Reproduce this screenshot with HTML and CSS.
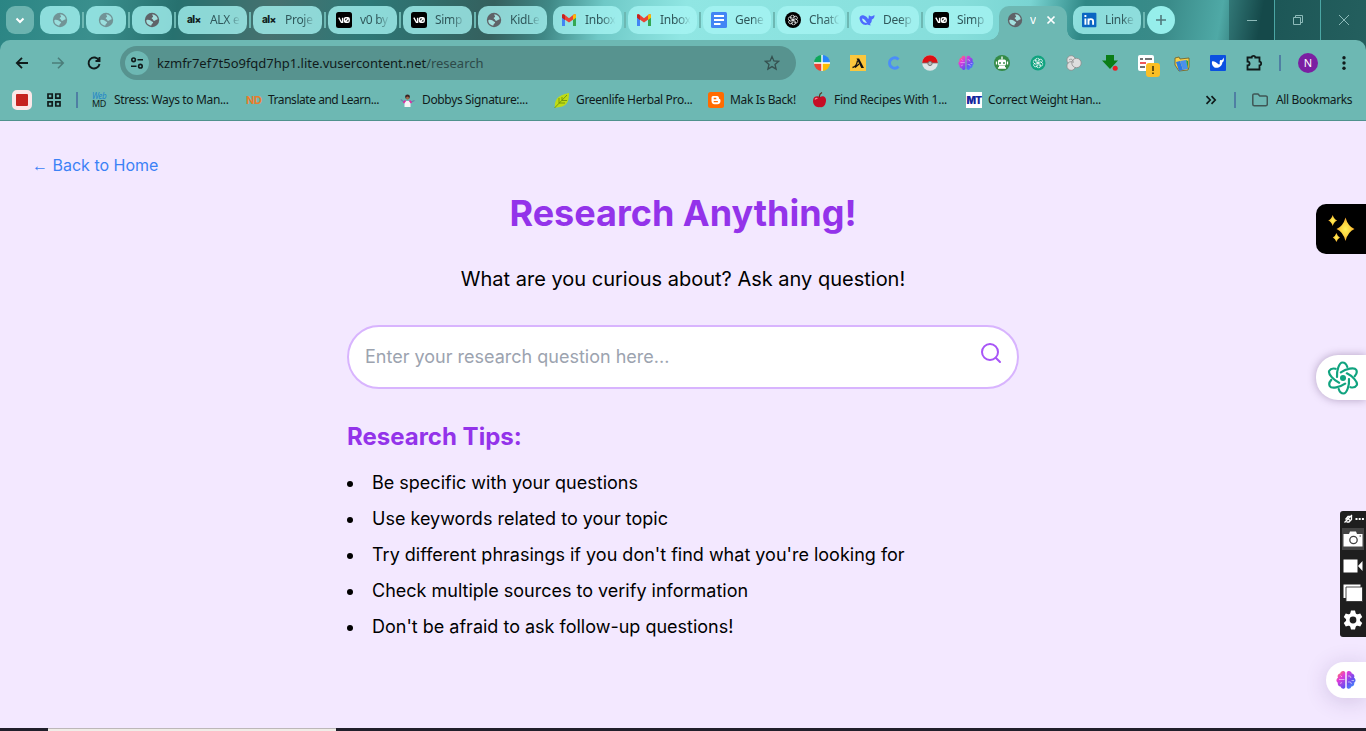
FILE: index.html
```html
<!DOCTYPE html>
<html lang="en">
<head>
<meta charset="utf-8">
<title>Research</title>
<link rel="stylesheet" href="styles.css">
</head>
<body>
<svg class="defs" aria-hidden="true">
  <symbol id="globe" viewBox="0 0 16 16"><circle cx="8" cy="8" r="7.2" fill="#5f6368"/><path d="M2.300 8.200c1.200-.6 2.700-.4 3.900.1 1 .5 1.300 1.300 2.300 1.500.9.300.8 1.400 0 1.700-.8.200-.9.900-1.100 2-2.900-.2-5.300-2.400-5.100-5.300zM8.300 2.300c2.700.1 5 2 5.400 4.700-.5 1.100-1.700.4-2.200 1.200-.8 1-2.400.7-2.500-.5-.1-.8-1.300-.6-1.300-1.500 0-.8.900-.8 1.300-1.300.5-.8-1-1.300-.7-2.600z" fill="#a4e0de"/></symbol>
  <symbol id="vzero" viewBox="0 0 16 16"><rect width="16" height="16" rx="2.500" fill="#000"/><path d="M2.800 5.700l2.600 4.600h1.200V5.700M8.500 9.100V6.900c0-.8.5-1.200 1.200-1.200h2.200c.8 0 1.300.5 1.300 1.200v2.200c0 .8-.5 1.200-1.300 1.200H9.700c-.7 0-1.200-.4-1.200-1.200zM9 10l3.800-4" fill="none" stroke="#fff" stroke-width="1.400"/></symbol>
  <symbol id="gmail" viewBox="0 0 16 12"><path d="M1 1v11h3V4z" fill="#4285f4"/><path d="M12 3v9h3V1z" fill="#34a853"/><path d="M1 2V1.600C1 .2 2.300-.2 3.300.6L8 4.200 12.700.6C13.700-.2 15 .2 15 1.600V3.500L8 8.600 1 3.500z" fill="#ea4335"/><path d="M12 1.200l.7-.6C13.700-.2 15 .2 15 1.600v2.200l-3 2.200z" fill="#fbbc04"/><path d="M1 1.600C1 .6 1.900 0 2.800.4L4 1.200V6L1 3.800z" fill="#c5221f"/></symbol>
  <symbol id="knot" viewBox="0 0 24 24"><g fill="none" stroke="currentColor" stroke-width="1.700"><path id="petal" d="M12 6.500l4.700-2.700c4-1.300 6.500 4 3.300 6.700l-2 1.200M12 6.500V12"/><use href="#petal" transform="rotate(60 12 12)"/><use href="#petal" transform="rotate(120 12 12)"/><use href="#petal" transform="rotate(180 12 12)"/><use href="#petal" transform="rotate(240 12 12)"/><use href="#petal" transform="rotate(300 12 12)"/></g></symbol>
  <linearGradient id="brainfill" x1="0" y1="0" x2="1" y2="1"><stop offset="0" stop-color="#ff8a3c"/><stop offset=".3" stop-color="#e43ad8"/><stop offset=".65" stop-color="#6a4df0"/><stop offset="1" stop-color="#31a6ff"/></linearGradient>
  <symbol id="brain" viewBox="0 0 20 20"><path d="M9.300 2.500C8 0 4.500 1 4.200 3.500 2 3.800 1 6 2 7.700-.3 9 .2 12 1.800 12.700 1.300 15 3 16.600 4.600 16.500 5.500 19.300 8.800 19.300 9.300 17.200zM10.700 2.500C12 0 15.500 1 15.800 3.500 18 3.800 19 6 18 7.700c2.300 1.300 1.800 4.300.2 5 .5 2.300-1.200 3.900-2.800 3.800-.9 2.800-4.200 2.800-4.700.7z" fill="url(#brainfill)"/><path d="M3 9.500h5.500M4.500 5.500L6 7M4 13.500l2-1M12 6h2l1 2M12 12h2.500l1 2M15.500 10.500H18" fill="none" stroke="#fff" stroke-opacity=".6" stroke-width=".9"/></symbol>
</svg>

<div class="browser">
  <div class="tabstrip">
    <div class="tab-search"><svg width="10" height="7" viewBox="0 0 10 7"><path d="M1.500 1.500L5 5l3.500-3.500" fill="none" stroke="#fff" stroke-width="2"/></svg></div>
    <div class="tab pinned dim sep"><svg class="fav"><use href="#globe"/></svg></div>
    <div class="tab pinned dim sep"><svg class="fav"><use href="#globe"/></svg></div>
    <div class="tab pinned sep"><svg class="fav"><use href="#globe"/></svg></div>
    <div class="tab sep"><span class="fav alx">al×</span><span class="label">ALX e</span></div>
    <div class="tab sep"><span class="fav alx">al×</span><span class="label">Proje</span></div>
    <div class="tab sep"><svg class="fav"><use href="#vzero"/></svg><span class="label">v0 by</span></div>
    <div class="tab sep"><svg class="fav"><use href="#vzero"/></svg><span class="label">Simp</span></div>
    <div class="tab"><svg class="fav"><use href="#globe"/></svg><span class="label">KidLe</span></div>
    <div class="tab sep"><svg class="fav"><use href="#gmail"/></svg><span class="label">Inbox</span></div>
    <div class="tab sep"><svg class="fav"><use href="#gmail"/></svg><span class="label">Inbox</span></div>
    <div class="tab narrow sep"><svg class="fav" viewBox="0 0 16 16"><rect width="16" height="16" rx="1.500" fill="#4285f4"/><path d="M3 4h10M3 8h10M3 12h6.500" stroke="#fff" stroke-width="2"/></svg><span class="label">Gene</span></div>
    <div class="tab narrow sep"><svg class="fav" viewBox="0 0 16 16"><circle cx="8" cy="8" r="8" fill="#000"/><svg x="2.500" y="2.500" width="11" height="11" color="#fff"><use href="#knot"/></svg></svg><span class="label">ChatG</span></div>
    <div class="tab narrow sep"><svg class="fav" viewBox="0 0 16 16"><path d="M.5 6C1 3.500 3 2.800 5 3.600l2 .9c1 .3 1.200 1.500 2.200 2.500C10 6 9.500 4.500 10 3c1 1.500 2.500 1.500 3 1.200L15.500 3c.2 2.500-1 4-2.700 4.400.2 2-.8 3.600-2 4.600l1.200 1.200c-1.400.3-2.500 0-3.500-.6C4.500 13.800.8 11 .5 6z" fill="#4d6bfe"/><path d="M3 6.500c2.500.2 3.500 2.500 5 4.500-2.500 0-4.700-1.500-5-4.500z" fill="#b7f4f4"/></svg><span class="label">Deep</span></div>
    <div class="tab narrow"><svg class="fav"><use href="#vzero"/></svg><span class="label">Simp</span></div>
    <div class="tab narrow active"><svg class="fav"><use href="#globe"/></svg><span class="label">v</span><svg class="close" width="10" height="10" viewBox="0 0 10 10"><path d="M1.500 1.500l7 7m0-7l-7 7" stroke="#fff" stroke-width="1.700"/></svg></div>
    <div class="tab narrow sep"><svg class="fav" viewBox="0 0 16 16"><rect x="1" y=".8" width="14.400" height="14.400" rx="1" fill="#0a66c2"/><path d="M4.400 6.500v6.200M4.400 3v1.900M7.500 12.700V6.500M7.500 9.400c0-3 4.600-3 4.600 0v3.300" fill="none" stroke="#fff" stroke-width="1.900"/></svg><span class="label">Linke</span></div>
    <div class="newtab"><svg width="12" height="12" viewBox="0 0 12 12"><path d="M6 1v10M1 6h10" stroke="#50787c" stroke-width="1.600"/></svg></div>
    <div class="controls">
      <span><svg width="12" height="12"><path d="M1 6.500h10"/></svg></span>
      <span><svg width="12" height="12"><path d="M1.500 3.500h7v7h-7zM3.500 3.500v-2h7v7h-2"/></svg></span>
      <span><svg width="12" height="12"><path d="M1 1l10 10M11 1L1 11"/></svg></span>
    </div>
  </div>

  <div class="toolbar">
    <svg class="nav" viewBox="0 0 16 16"><path d="M14 8H3M8 2.800L2.800 8 8 13.200" fill="none" stroke="#101b1b" stroke-width="1.800"/></svg>
    <svg class="nav" viewBox="0 0 16 16"><path d="M2 8h11M8 2.800L13.200 8 8 13.200" fill="none" stroke="#4b7d7a" stroke-width="1.600"/></svg>
    <svg class="nav" viewBox="0 0 16 16"><path d="M13 5.500A5.500 5.500 0 1 0 13.500 9M13.500 2v4H9.500" fill="none" stroke="#101b1b" stroke-width="1.900"/></svg>
    <div class="omnibox">
      <span class="site"><svg width="14" height="14" viewBox="0 0 14 14" fill="none" stroke="#101b1b" stroke-width="1.600"><circle cx="3.600" cy="3.800" r="1.800"/><path d="M7.500 3.800H13M1 10.200h5.500"/><circle cx="10.400" cy="10.200" r="1.800"/></svg></span>
      <span class="url">kzmfr7ef7t5o9fqd7hp1.lite.vusercontent.net<span class="path">/research</span></span>
      <svg class="star" viewBox="0 0 16 16"><path d="M8 1.500l1.900 4.400 4.700.4-3.600 3.100 1.100 4.700L8 11.600l-4.100 2.500L5 9.400 1.400 6.300l4.700-.4z" fill="none" stroke="#35504f" stroke-width="1.300"/></svg>
    </div>
    <div class="extensions">
      <svg viewBox="0 0 16 16"><path d="M8 0a8 8 0 0 0-8 8h8z" fill="#0ea75a"/><path d="M8 0a8 8 0 0 1 8 8H8z" fill="#2684fc"/><path d="M0 8a8 8 0 0 0 8 8V8z" fill="#ea4335"/><path d="M8 16a8 8 0 0 0 8-8H8z" fill="#fbbc04"/><path d="M8 0v16M0 8h16" stroke="#fff" stroke-width="1.400"/></svg>
      <svg viewBox="0 0 16 16"><path fill="#fbc73d" d="M0 0h16v16H0z"/><path d="M6.500 3.500h2.600L14 13h-2.700L8 6.200z" fill="#111"/><path d="M2.500 12.500C5 12 7 9 7.500 5.500M5 12.500l4-3.500" fill="none" stroke="#111" stroke-width="1.300"/></svg>
      <svg viewBox="0 0 16 16"><path d="M12.500 4.500C9 .8 3.500 3.500 3.500 8s5.500 7.200 9 3.500" fill="none" stroke="#4b8df8" stroke-width="2.800"/></svg>
      <svg viewBox="0 0 16 16"><circle cx="8" cy="8" r="7.800" fill="#dfe5e7"/><path d="M.2 8a7.800 7.800 0 0 1 15.600 0z" fill="#dd1014"/><path d="M.2 8h15.600" stroke="#777" stroke-width=".8"/><circle cx="8" cy="8.500" r="2.100" fill="#b9b9b9" stroke="#777"/></svg>
      <svg><use href="#brain"/></svg>
      <svg viewBox="0 0 16 16"><circle cx="8" cy="8" r="8" fill="#348b46"/><rect x="4" y="4.500" width="8" height="6" rx="1.500" fill="#fff"/><path d="M8 1.500v3M4 13h8M5 11.500h6M2.500 6.500v3M13.500 6.500v3" stroke="#fff" stroke-width="1.300"/><path d="M6 7v2M10 7v2" stroke="#348b46" stroke-width="1.400"/></svg>
      <svg viewBox="0 0 16 16"><circle cx="8" cy="8" r="7.500" fill="#10a37f"/><svg class="inner" x="2.500" y="2.500" width="11" height="11" color="#fff"><use href="#knot"/></svg></svg>
      <svg viewBox="0 0 16 16" fill="#dedede" stroke="#8c8c8c" stroke-width=".8"><circle cx="5.200" cy="5" r="4.300"/><circle cx="5.200" cy="11" r="4.300"/><circle cx="10.500" cy="8" r="4.700"/><path d="M3 5c2-2 5 0 4 3" fill="none"/></svg>
      <svg viewBox="0 0 16 16"><path d="M4 0h8v5.500h4L8 14 0 5.500h4z" fill="#0b7d17"/><circle cx="13.200" cy="13.300" r="2.500" fill="#ed1c24"/></svg>
      <svg viewBox="0 0 16 16"><rect width="16" height="16" rx="2" fill="#fff"/><path d="M2 4h3M7 4h7M2 12h5" stroke="#444" stroke-width="1.500"/><path d="M2 8h6" stroke="#ed3b3b" stroke-width="1.700"/><rect x="8" y="8" width="14" height="14" rx="3" fill="#fbbf24"/><path d="M15 11v5M15 17.500V19" stroke="#3a2c00" stroke-width="1.500"/></svg>
      <svg viewBox="0 0 16 16"><path d="M1 3l4-1 1 2 9-1v9l-1 3-9 1-4-6z" fill="#f7cf4b" stroke="#705b20" stroke-width=".8"/><path d="M2 7l4-1 3 9-4 1z" fill="#2b78e4"/><path d="M6 6l6-1 2 9-5 1z" fill="#4a90ec"/><path d="M12 5l2 1v8z" fill="#1a9d50"/></svg>
      <svg viewBox="0 0 16 16"><rect width="16" height="16" rx="1" fill="#0b50e0"/><path d="M2 6.500c1.500-.8 4 .5 5.500 2 1.500 1.300 2.500 1.200 2.200-.5C9.500 6.500 10 5 10.500 5c1.500.5 2.500-.5 3-2.500.8 2.500.3 4.300-1.200 5 .2 4.500-7 7.500-9.300 3.500C2 9.500 1.700 8 2 6.500z" fill="#fff"/></svg>
      <svg viewBox="0 0 16 16"><path d="M1.500 2.500h4.200c0-2.200 3.600-2.200 3.600 0h4.200v4.200c2.200 0 2.200 3.600 0 3.600v4.200h-12v-4c2.800 0 2.800-4 0-4z" fill="none" stroke="#101b1b" stroke-width="1.800"/></svg>
    </div>
    <i class="rule"></i>
    <span class="avatar">N</span>
    <svg class="menu" width="4" height="16" viewBox="0 0 4 16" fill="#101b1b"><circle cx="2" cy="2.800" r="1.700"/><circle cx="2" cy="8" r="1.700"/><circle cx="2" cy="13.200" r="1.700"/></svg>
  </div>

  <div class="bookmarks">
    <span class="rec"></span>
    <svg class="apps" width="16" height="16" viewBox="0 0 16 16" fill="none" stroke="#101b1b" stroke-width="1.700"><path d="M2 2h4.200v4.200H2zM9.800 2H14v4.200H9.800zM2 9.800h4.200V14H2zM9.800 9.800H14V14H9.800z"/></svg>
    <i class="rule"></i>
    <div class="list">
      <div class="bm"><span class="ico webmd"><b>Web</b><span>MD</span></span><span class="name">Stress: Ways to Man...</span></div>
      <div class="bm"><span class="ico nd">ND</span><span class="name tight">Translate and Learn...</span></div>
      <div class="bm"><svg class="ico" viewBox="0 0 16 16"><path d="M4.500 15V9h6v6z" fill="#f5f5f5"/><path d="M4 10L.8 7.500M11 10l3.500-1.500" stroke="#6a7fa8" stroke-width="1.100"/><path d="M3.500 11l2-2.500M11.500 11l-2-2.500" stroke="#df2da4" stroke-width="1.800"/><circle cx="7.500" cy="4.800" r="2.400" fill="#3b2221"/><circle cx="7.500" cy="6" r="1.500" fill="#a56a4b"/></svg><span class="name">Dobbys Signature:...</span></div>
      <div class="bm"><svg class="ico" viewBox="0 0 16 16"><path d="M15 1c0 8-2 13-9 14l-5 .8C0 9 3 3 15 1z" fill="#bfdc16"/><path d="M.5 16L13 3M5 11V6M5 11h6M8 8.500V5M8 8.500h5" stroke="#71920b" stroke-width=".9" fill="none"/></svg><span class="name">Greenlife Herbal Pro...</span></div>
      <div class="bm short"><svg class="ico" viewBox="0 0 16 16"><rect width="16" height="16" rx="2.500" fill="#ff6b00"/><path d="M5 4h4c1.500 0 2 .8 2 2.700 1.500.3 1.500 1 1.500 2.300 0 2-1 3.200-3 3.200H6.500C4.500 12.200 3.500 11 3.500 9V6c0-1.200.6-2 1.500-2z" fill="#fff"/><path d="M5.700 6.500h2.600M5.700 9.700h4.200" stroke="#ff6b00" stroke-width="1.300"/></svg><span class="name">Mak Is Back!</span></div>
      <div class="bm"><svg class="ico" viewBox="0 0 16 16"><path d="M8 5c3-2 6.500 0 6 4-.5 4.500-3 7-6 6-3.500 1-7-2-7-6 0-4.500 4-5.500 7-4z" fill="#c60d25"/><path d="M7.500 5.500C7 3 8 1.500 10 .5" stroke="#5b3422" stroke-width="1.200" fill="none"/><path d="M3 7.500c.5-1 1.500-1.300 2.500-1" stroke="#f58a94" stroke-width="1.200" fill="none"/></svg><span class="name loose">Find Recipes With 1...</span></div>
      <div class="bm"><span class="ico mt">MT</span><span class="name">Correct Weight Han...</span></div>
    </div>
    <svg class="more" width="12" height="10" viewBox="0 0 12 10"><path d="M1.500 1.200L5.200 5 1.500 8.800M6.500 1.200L10.200 5 6.500 8.800" fill="none" stroke="#101b1b" stroke-width="1.700"/></svg>
    <i class="rule"></i>
    <svg class="folder" width="16" height="14" viewBox="0 0 16 14"><path d="M.8 2.500c0-1 .6-1.600 1.500-1.600H6l1.800 2h6c.9 0 1.500.6 1.500 1.500v6.800c0 .9-.6 1.500-1.500 1.500H2.300c-.9 0-1.500-.6-1.500-1.500z" fill="none" stroke="#3f5655" stroke-width="1.500"/></svg>
    <span class="name all">All Bookmarks</span>
  </div>
</div>

<main class="page">
  <a class="back"><span class="arrow">←</span> Back to Home</a>
  <div class="content">
    <h1>Research Anything!</h1>
    <p>What are you curious about? Ask any question!</p>
    <div class="search">
      <span class="placeholder">Enter your research question here...</span>
      <svg width="24" height="24" viewBox="0 0 24 24" fill="none" stroke="#a855f7" stroke-width="2" stroke-linecap="round"><circle cx="11" cy="11" r="8"/><path d="M21 21l-4.300-4.300"/></svg>
    </div>
    <h2>Research Tips:</h2>
    <ul>
      <li>Be specific with your questions</li>
      <li>Use keywords related to your topic</li>
      <li>Try different phrasings if you don't find what you're looking for</li>
      <li>Check multiple sources to verify information</li>
      <li>Don't be afraid to ask follow-up questions!</li>
    </ul>
  </div>
</main>

<footer class="taskbar"><span></span></footer>

<div class="float sparkle"><svg width="28" height="28" viewBox="0 0 28 28"><defs><radialGradient id="gold"><stop offset="0" stop-color="#fff25a"/><stop offset=".55" stop-color="#fcd33f"/><stop offset="1" stop-color="#f5a02c"/></radialGradient></defs><g fill="url(#gold)"><path d="M17.500 2.500Q20 11.500 26.500 14 20 16.500 17.500 26 15 16.500 8.500 14 15 11.500 17.500 2.500z"/><path d="M4.700 0Q6 4.200 9.200 5.500 6 6.800 4.700 11 3.400 6.800.2 5.500 3.400 4.200 4.700 0z"/><path d="M8.400 18Q9.500 21.400 12 22.500 9.500 23.600 8.400 27 7.300 23.600 4.800 22.500 7.300 21.400 8.400 18z"/></g></svg></div>
<div class="float atom"><svg width="32" height="34" viewBox="-16 -17 32 34" fill="none" stroke="#10a37f" stroke-width="2.200" stroke-linecap="round"><path id="loop" d="M-6-1C-6.500-7-4-15.500-.5-15.500 1.700-15.500 3.500-13.500 4.300-11"/><use href="#loop" transform="rotate(60)"/><use href="#loop" transform="rotate(120)"/><use href="#loop" transform="rotate(180)"/><use href="#loop" transform="rotate(240)"/><use href="#loop" transform="rotate(300)"/><circle r="3" fill="#10a37f" stroke="none"/></svg></div>
<div class="float recorder">
  <svg class="grip" width="22" height="10" viewBox="0 0 22 10"><path d="M1.500 8.500L9 1M2.500 5.500L5 2.500h3.500v3L6 8H3.500M4.500 4l2.500 2.500" fill="none" stroke="#fff" stroke-width="1.300"/><path d="M12.500 4h2v2h-2zM15.700 4h2v2h-2zM18.900 4h2v2h-2z" fill="#fff"/></svg>
  <span class="on"><svg width="20" height="18" viewBox="0 0 20 18"><path d="M.5 4H6l1-2.500h6L14 4h5.500v12.500H.5z" fill="#fff"/><circle cx="10.500" cy="10" r="3.700" fill="none" stroke="#444" stroke-width="1.300"/><path d="M16.500 6h1.500" stroke="#444"/></svg></span>
  <span><svg width="20" height="14" viewBox="0 0 20 14" fill="#fff"><path d="M.5.500H14.500v13H.5zM15 7l4.500-5v10z"/></svg></span>
  <span><svg width="20" height="18" viewBox="0 0 20 18"><path d="M.5.500h17V14H.5z" fill="#fff"/><path d="M3 3h16.500v14.500H3z" fill="#fff" stroke="#333" stroke-width=".9"/></svg></span>
  <span><svg width="20" height="20" viewBox="0 0 20 20"><g fill="#fff"><circle cx="10" cy="10" r="7"/><path id="tooth" d="M8 .5h4l1.300 5H6.700zM8 19.500h4l1.300-5H6.700z"/><use href="#tooth" transform="rotate(60 10 10)"/><use href="#tooth" transform="rotate(120 10 10)"/></g><circle cx="10" cy="10" r="3.400" fill="#1e1e1e"/></svg></span>
</div>
<div class="float brainy"><svg width="20" height="20"><use href="#brain"/></svg></div>
</body>
</html>
```
FILE: styles.css
```css
* { box-sizing: border-box; }
body { margin: 0; width: 1366px; height: 731px; overflow: hidden; display: flex; flex-direction: column; position: relative; background: #f3e8ff; font-family: Inter, sans-serif; color: #000; }
svg { display: block; flex: none; }
.defs { position: absolute; width: 0; height: 0; }

.browser { height: 121px; flex: none; background: linear-gradient(100deg, #2b8584 0, #3a8f8d 7%, #27716f 13%, #46716f 20%, #2d7877 27%, #35605e 36%, #3f8886 40%, #6fc9c7 44%, #90e6e3 50%, #86dedb 70%, #79d4d2 75%, #2f8886 79%, #3a8b89 85%, #4fa9a6 89%, #1c5656 92%, #245f5e 100%); background-size: 100% 50px; background-repeat: no-repeat; font-family: "Noto Sans", sans-serif; color: #101b1b; }

/* Tab strip */
.tabstrip { height: 40px; padding: 6px 0 0 6px; display: flex; gap: 6px; }
.tab-search { width: 28px; height: 28px; border-radius: 9px; background: #6bb3af; display: flex; align-items: center; justify-content: center; }
.tab { position: relative; width: 69px; height: 28px; border-radius: 10px; padding-left: 8px; display: flex; align-items: center; background: rgba(166, 245, 243, .78); }
.tab.narrow { width: 68px; }
.tab.pinned { width: 40px; padding-left: 12px; }
.dim .fav { opacity: .6; }
.fav { width: 16px; height: 16px; flex: none; }
.alx { padding-left: 1px; font: 800 10px/14px Inter, sans-serif; letter-spacing: -.6px; color: #122; }
.tab .label { width: 31px; margin-left: 8px; overflow: hidden; white-space: nowrap; font-size: 12px; line-height: 18px; letter-spacing: -.3px; color: #30585b; -webkit-mask-image: linear-gradient(90deg, #000 55%, transparent 98%); mask-image: linear-gradient(90deg, #000 55%, transparent 98%); }
.sep::after { content: ""; position: absolute; right: -4px; top: 6px; width: 2px; height: 16px; background: #6db8b3; }
.tab.active { height: 34px; padding-bottom: 6px; border-radius: 10px 10px 0 0; background: #6db8b3; }
.tab.active::before, .tab.active::after { content: ""; position: absolute; bottom: 0; width: 10px; height: 10px; }
.tab.active::before { left: -10px; background: radial-gradient(circle at 0 0, transparent 9.5px, #6db8b3 10px); }
.tab.active::after { right: -10px; background: radial-gradient(circle at 100% 0, transparent 9.5px, #6db8b3 10px); }
.tab.active .label { width: 6px; margin-left: 7px; color: #fff; -webkit-mask-image: none; mask-image: none; }
.close { margin-left: 10px; }
.newtab { width: 28px; height: 28px; border-radius: 50%; background: #96eeeb; display: flex; align-items: center; justify-content: center; }
.controls { margin: -6px 0 0 auto; display: flex; }
.controls span { width: 46px; height: 40px; display: flex; align-items: center; justify-content: center; border-left: 1px solid #4ba6a4; }
.controls span:first-child { width: 45px; border: 0; background: rgba(10, 50, 52, .35); }
.controls svg { fill: none; stroke: #8dbab9; }

/* Toolbar */
.toolbar { height: 46px; padding: 0 20px 0 14px; background: #6db8b3; border-radius: 10px 10px 0 0; display: flex; align-items: center; }
.nav { width: 16px; height: 16px; margin-right: 20px; }
.omnibox { width: 676px; height: 34px; margin-left: -2px; padding-left: 5px; border-radius: 17px; background: #57938f; display: flex; align-items: center; }
.site { width: 24px; height: 24px; border-radius: 50%; background: #6db8b3; display: flex; align-items: center; justify-content: center; }
.url { margin-left: 8px; font-size: 13px; line-height: 20px; letter-spacing: -.02px; white-space: nowrap; }
.path { color: #2d4a49; }
.star { width: 16px; height: 16px; margin: 0 16px 0 auto; }
.extensions { display: flex; gap: 20px; margin-left: 18px; }
.extensions > svg { width: 16px; height: 16px; overflow: visible; }
.rule { width: 2px; height: 16px; background: #4f7fa3; flex: none; }
.extensions + .rule { margin-left: 17px; }
.avatar { width: 20px; height: 20px; margin-left: 17px; border-radius: 50%; background: #7b1fa2; color: #fff; font-size: 11px; line-height: 20px; text-align: center; }
.menu { margin-left: 24px; }

/* Bookmarks bar */
.bookmarks { height: 35px; padding: 0 0 7px 12px; display: flex; align-items: center; background: #6db8b3; border-bottom: 1px solid #4f918d; }
.rec { width: 20px; height: 20px; border-radius: 5px; border: 4px solid #fbe7e8; background: #c5221f; }
.apps { margin: 0 14px; }
.list { display: flex; margin-left: 14px; width: 1113px; }
.bm { width: 154px; display: flex; align-items: center; flex: none; }
.bm.short { width: 104px; }
.ico { width: 16px; height: 16px; flex: none; }
.name { margin-left: 6px; font-size: 12px; line-height: 18px; letter-spacing: -.35px; white-space: nowrap; }
.name.tight { letter-spacing: -.46px; }
.name.loose { letter-spacing: -.27px; }
.webmd { display: flex; flex-direction: column; font-size: 9px; line-height: 8px; letter-spacing: -.4px; }
.webmd b { font-size: 8px; color: #2286c9; font-style: italic; font-weight: 400; }
.nd { font: 700 11px/16px Inter, sans-serif; letter-spacing: -.3px; color: #e87d2c; }
.mt { background: #fff; font: 900 10px/16px Inter, sans-serif; letter-spacing: -.6px; color: #15259c; text-align: center; }
.more { margin-right: 17px; }
.folder { margin-left: 16px; }
.all { margin-left: 8px; }

/* Research page */
.page { flex: 1; padding: 32px; }
.back { display: block; height: 24px; font-size: 16px; line-height: 24px; color: #3b82f6; }
.arrow { font-family: "Liberation Sans", sans-serif; line-height: 1; }
.content { width: 672px; margin: 16px auto 0; }
h1 { margin: 0 0 32px; font-size: 36px; line-height: 40px; font-weight: 700; text-align: center; color: #9333ea; }
p { margin: 0 0 32px; font-size: 20px; line-height: 28px; text-align: center; }
.search { height: 64px; padding: 14px; border: 2px solid #d8b4fe; border-radius: 32px; background: #fff; display: flex; justify-content: space-between; }
.placeholder { padding-left: 2px; font-size: 18px; line-height: 32px; color: #9ca3af; }
h2 { margin: 32px 0 16px; font-size: 24px; line-height: 32px; font-weight: 700; color: #9333ea; }
ul { margin: 0; padding: 0; list-style-position: inside; font-size: 18px; line-height: 28px; display: flex; flex-direction: column; gap: 8px; }
.taskbar { height: 3px; flex: none; padding-left: 48px; background: #201f2b; }
.taskbar span { display: block; width: 288px; height: 3px; background: #f0ede8; border-top: 1px solid #bcb7b9; }

/* Floating widgets docked to the right edge */
.float { position: absolute; right: 0; display: flex; align-items: center; }
.sparkle { top: 204px; width: 50px; height: 50px; padding-left: 12px; border-radius: 10px 0 0 10px; background: #000; }
.atom { top: 355px; width: 50px; height: 45px; padding-left: 11px; border-radius: 22px 0 0 22px; background: #fff; box-shadow: 0 0 8px rgba(60, 30, 80, .35); }
.recorder { top: 511px; width: 26px; height: 126px; padding-top: 3px; border-radius: 3px 0 0 3px; background: #1e1e1e; flex-direction: column; }
.grip { margin: 0 0 4px 2px; }
.recorder span { width: 22px; height: 22px; margin-bottom: 5px; display: flex; align-items: center; justify-content: center; }
.recorder .on { background: #444; }
.brainy { top: 662px; width: 40px; height: 36px; padding-left: 10px; border-radius: 18px 0 0 18px; background: #fff; box-shadow: 0 3px 22px rgba(80, 50, 120, .2); }
```
